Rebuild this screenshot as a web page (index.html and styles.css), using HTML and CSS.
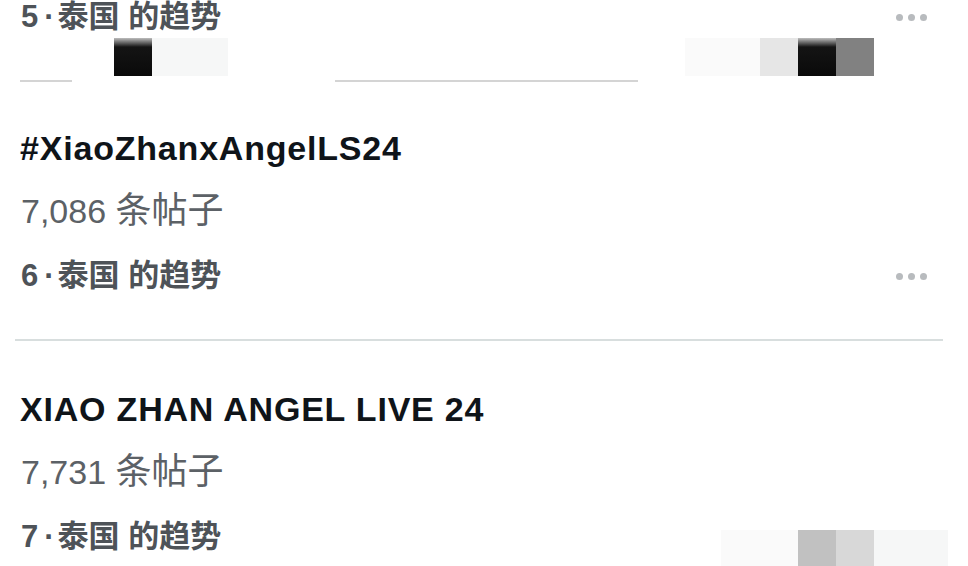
FILE: index.html
```html
<!DOCTYPE html>
<html lang="zh-CN">
<head>
<meta charset="utf-8">
<title>趋势</title>
<link rel="stylesheet" href="styles.css">
</head>
<body>
<div class="feed">
  <div class="trend-row">
    <span class="trend">5<span class="sep">·</span>泰国 的趋势</span>
    <span class="more"><i></i><i></i><i></i></span>
  </div>
  <div class="redact">
    <div class="blk-row">
      <span class="blk blk-black b-a"></span>
      <span class="blk blk-faint b-b"></span>
      <span class="grow"></span>
      <span class="blk blk-faint2 b-c"></span>
      <span class="blk blk-light"></span>
      <span class="blk blk-black"></span>
      <span class="blk blk-grey"></span>
    </div>
    <div class="rule-row">
      <span class="seg seg-a"></span>
      <span class="seg seg-b"></span>
    </div>
  </div>

  <article class="item first">
    <div class="title">#XiaoZhanxAngelLS24</div>
    <div class="count">7,086 <span class="cjk">条帖子</span></div>
    <div class="trend-row tall">
      <span class="trend">6<span class="sep">·</span>泰国 的趋势</span>
      <span class="more"><i></i><i></i><i></i></span>
    </div>
  </article>

  <div class="divider"></div>

  <article class="item second">
    <div class="title">XIAO ZHAN ANGEL LIVE 24</div>
    <div class="count">7,731 <span class="cjk">条帖子</span></div>
    <div class="trend-row tall">
      <span class="trend">7<span class="sep">·</span>泰国 的趋势</span>
      <span class="redact-bottom">
        <span class="blk blk-faint2 w77"></span>
        <span class="blk blk-mid"></span>
        <span class="blk blk-pale"></span>
        <span class="blk blk-faint w74"></span>
      </span>
    </div>
  </article>
</div>
</body>
</html>
```

FILE: styles.css
```css
* { box-sizing: border-box; }
html, body {
  margin: 0;
  padding: 0;
  background: #ffffff;
  overflow: hidden;
}
body {
  width: 968px;
  height: 566px;
  font-family: "Liberation Sans", "Noto Sans CJK SC", sans-serif;
}
.feed {
  display: flex;
  flex-direction: column;
}

/* trend meta line */
.trend-row {
  display: flex;
  justify-content: space-between;
  align-items: flex-start;
  height: 34px;
  padding-left: 21px;
  padding-right: 41px;
}
.trend-row.tall { height: 66px; padding-top: 16px; }
.trend {
  font-size: 31px;
  line-height: 34px;
  font-weight: 700;
  color: #4e5358;
  white-space: pre;
}
.sep {
  display: inline-block;
  margin: 0 3px 0 6px;
  font-weight: 700;
}
.more {
  display: flex;
  gap: 5px;
  margin-top: 14px;
}
.more i {
  display: block;
  width: 7px;
  height: 7px;
  border-radius: 50%;
  background: #b8bbbe;
}

/* censored strip */
.redact { margin-top: 4px; }
.blk-row {
  display: flex;
  height: 38px;
  padding-left: 114px;
  padding-right: 94px;
}
.blk { display: block; width: 38px; height: 100%; }
.b-b { width: 76px; }
.b-c { width: 75px; }
.grow { flex: 1; }
.blk-black { background: linear-gradient(#bdbdbd 0, #141414 9px, #0a0a0a 100%); }
.blk-faint { background: #f6f7f7; }
.blk-faint2 { background: #fafafa; }
.blk-light { background: #e6e6e6; }
.blk-grey { background: #818181; }
.blk-mid { background: #c1c1c1; }
.blk-pale { background: #d8d8d8; }
.w77 { width: 77px; }
.w74 { width: 74px; }

.rule-row {
  display: flex;
  height: 2px;
  margin-top: 4px;
}
.seg { display: block; height: 2px; background: #d4d4d4; }
.seg-a { margin-left: 20px; width: 52px; }
.seg-b { margin-left: 263px; width: 303px; }

/* trend items */
.item { display: flex; flex-direction: column; }
.item.first { margin-top: 36px; }
.item.second { margin-top: 38px; }
.title {
  height: 61px;
  line-height: 61px;
  padding-left: 20px;
  font-size: 34px;
  font-weight: 700;
  letter-spacing: 0.8px;
  color: #0f1419;
  white-space: nowrap;
}
.count {
  height: 64px;
  line-height: 64px;
  padding-left: 21px;
  font-size: 34px;
  font-weight: 400;
  color: #5c6166;
  white-space: pre;
}
.count .cjk { font-size: 36px; }

.divider {
  height: 2px;
  margin: 30px 25px 0 15px;
  background: #d8dede;
}

.redact-bottom {
  display: flex;
  height: 40px;
  margin-top: 10px;
  margin-right: -21px;
}
```
